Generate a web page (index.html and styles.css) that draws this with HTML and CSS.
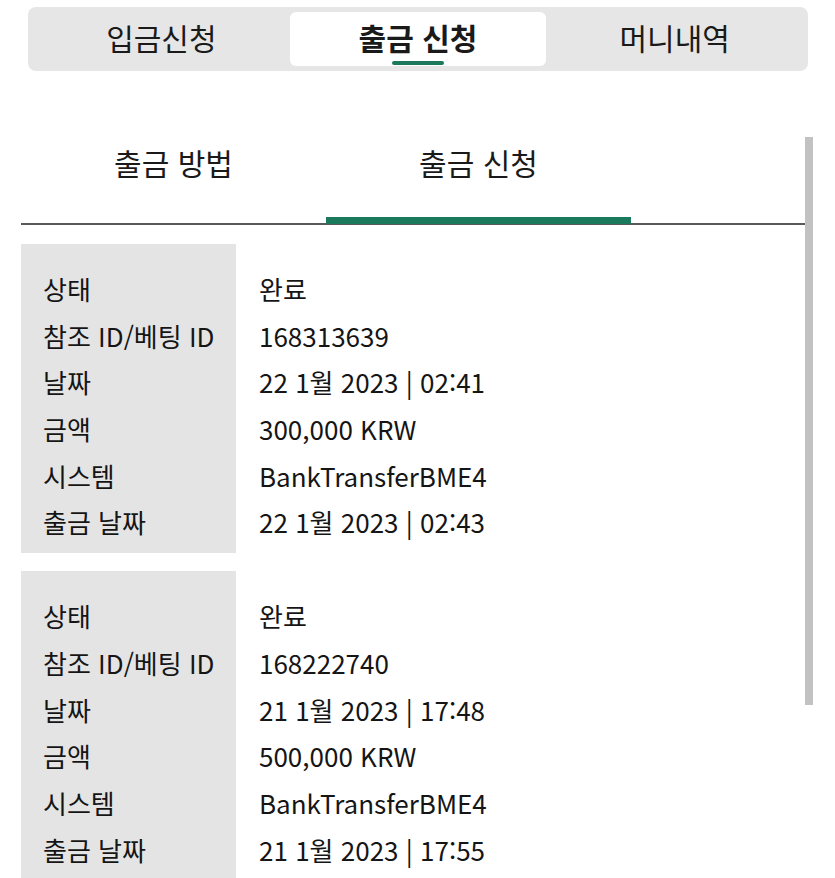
FILE: index.html
```html
<!DOCTYPE html>
<html lang="ko">
<head>
  <meta charset="UTF-8" />
  <meta name="viewport" content="width=device-width, initial-scale=1.0"/>
  <title>출금 신청</title>
  <link rel="stylesheet" href="styles.css">
</head>
<body>

  <div class="seg-bar">
    <div class="seg-btn">입금신청</div>
    <div class="seg-btn active">출금 신청</div>
    <div class="seg-btn">머니내역</div>
  </div>

  <div class="panel">
    <div class="scroll-thumb"></div>

    <div class="tabs">
      <div class="tab">출금 방법</div>
      <div class="tab active">출금 신청</div>
    </div>

    <div class="records">
      <div class="record">
        <div class="labels">
          <div class="row">상태</div>
          <div class="row">참조 ID/베팅 ID</div>
          <div class="row">날짜</div>
          <div class="row">금액</div>
          <div class="row">시스템</div>
          <div class="row">출금 날짜</div>
        </div>
        <div class="values">
          <div class="row">완료</div>
          <div class="row">168313639</div>
          <div class="row">22 1월 2023 | 02:41</div>
          <div class="row">300,000 KRW</div>
          <div class="row">BankTransferBME4</div>
          <div class="row">22 1월 2023 | 02:43</div>
        </div>
      </div>

      <div class="record">
        <div class="labels">
          <div class="row">상태</div>
          <div class="row">참조 ID/베팅 ID</div>
          <div class="row">날짜</div>
          <div class="row">금액</div>
          <div class="row">시스템</div>
          <div class="row">출금 날짜</div>
        </div>
        <div class="values">
          <div class="row">완료</div>
          <div class="row">168222740</div>
          <div class="row">21 1월 2023 | 17:48</div>
          <div class="row">500,000 KRW</div>
          <div class="row">BankTransferBME4</div>
          <div class="row">21 1월 2023 | 17:55</div>
        </div>
      </div>
    </div>
  </div>

</body>
</html>
```

FILE: styles.css
```css
body {
  font-family: "Noto Sans CJK KR", "Noto Sans", sans-serif;
  background: #fff;
  color: #151515;
  margin: 0;
  height: 878px;
  overflow: hidden;
}
.seg-bar {
  display: flex;
  margin: 7px 0 0 28px;
  width: 780px;
  height: 64px;
  box-sizing: border-box;
  padding: 5px;
  background: #e6e6e6;
  border-radius: 8px;
}
.seg-btn {
  flex: 1;
  position: relative;
  display: flex;
  align-items: center;
  justify-content: center;
  font-size: 30px;
  color: #1a1a1a;
  padding-bottom: 4px;
}
.seg-btn.active {
  background: #fff;
  border-radius: 6px;
  font-weight: bold;
}
.seg-btn.active::after {
  content: "";
  position: absolute;
  left: 50%;
  bottom: 1px;
  width: 52px;
  margin-left: -26px;
  height: 4px;
  border-radius: 2px;
  background: #1b7a5b;
}
.panel {
  position: relative;
  margin: 66px 0 0 21px;
  width: 792px;
}
.scroll-thumb {
  position: absolute;
  top: 0;
  right: 0;
  width: 8px;
  height: 568px;
  background: #c2c2c2;
}
.tabs {
  display: flex;
  height: 86px;
  border-bottom: 2px solid #5a5a5a;
}
.tab {
  width: 305px;
  text-align: center;
  font-size: 30px;
  line-height: 50px;
  color: #1a1a1a;
}
.tab.active {
  border-bottom: 7px solid #1b7a5b;
  margin-bottom: -1px;
}
.records {
  padding-top: 19px;
}
.record {
  display: flex;
  margin-bottom: 18px;
}
.labels {
  width: 215px;
  box-sizing: border-box;
  padding: 22px 0 7px 22px;
  background: #e4e4e4;
}
.values {
  padding: 22px 0 7px 23px;
}
.row {
  height: 46.7px;
  line-height: 46.7px;
  font-size: 26px;
  white-space: nowrap;
}
```
